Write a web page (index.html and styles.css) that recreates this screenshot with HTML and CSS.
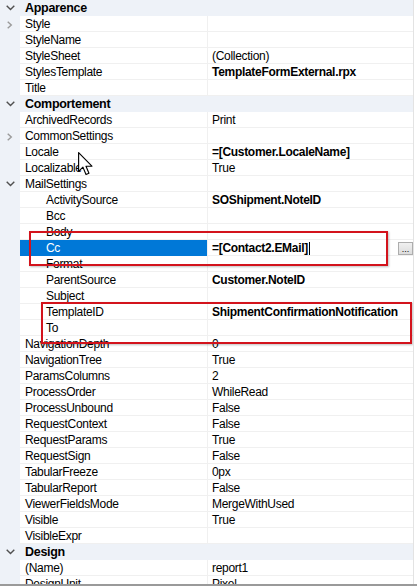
FILE: index.html
```html
<!DOCTYPE html>
<html>
<head>
<meta charset="utf-8">
<link rel="stylesheet" href="styles.css">
</head>
<body>
<div class="grid">
  <div class="row cat"><span class="gut"><svg class="down" width="9" height="6" viewBox="0 0 9 6"><polyline points="0.7,0.7 4.5,4.5 8.3,0.7"/></svg></span><span class="ctitle">Apparence</span></div>
  <div class="row"><span class="gut"><svg class="right" width="6" height="8" viewBox="0 0 6 8"><polyline points="0.7,0.7 4.3,4 0.7,7.3"/></svg></span><span class="name">Style</span><span class="val"></span></div>
  <div class="row"><span class="gut"></span><span class="name">StyleName</span><span class="val"></span></div>
  <div class="row"><span class="gut"></span><span class="name">StyleSheet</span><span class="val">(Collection)</span></div>
  <div class="row"><span class="gut"></span><span class="name">StylesTemplate</span><span class="val b">TemplateFormExternal.rpx</span></div>
  <div class="row"><span class="gut"></span><span class="name">Title</span><span class="val"></span></div>
  <div class="row cat"><span class="gut"><svg class="down" width="9" height="6" viewBox="0 0 9 6"><polyline points="0.7,0.7 4.5,4.5 8.3,0.7"/></svg></span><span class="ctitle">Comportement</span></div>
  <div class="row"><span class="gut"></span><span class="name">ArchivedRecords</span><span class="val">Print</span></div>
  <div class="row"><span class="gut"><svg class="right" width="6" height="8" viewBox="0 0 6 8"><polyline points="0.7,0.7 4.3,4 0.7,7.3"/></svg></span><span class="name">CommonSettings</span><span class="val"></span></div>
  <div class="row"><span class="gut"></span><span class="name">Locale</span><span class="val b">=[Customer.LocaleName]</span></div>
  <div class="row"><span class="gut"></span><span class="name">Localizable</span><span class="val">True</span></div>
  <div class="row"><span class="gut"><svg class="down" width="9" height="6" viewBox="0 0 9 6"><polyline points="0.7,0.7 4.5,4.5 8.3,0.7"/></svg></span><span class="name">MailSettings</span><span class="val"></span></div>
  <div class="row"><span class="gut"></span><span class="name sub">ActivitySource</span><span class="val b">SOShipment.NoteID</span></div>
  <div class="row"><span class="gut"></span><span class="name sub">Bcc</span><span class="val"></span></div>
  <div class="row"><span class="gut"></span><span class="name sub">Body</span><span class="val"></span></div>
  <div class="row"><span class="gut"></span><span class="name sub sel">Cc</span><span class="val b edit"><span>=[Contact2.EMail]</span><span class="caret"></span><span class="btn">...</span></span></div>
  <div class="row"><span class="gut"></span><span class="name sub">Format</span><span class="val"></span></div>
  <div class="row"><span class="gut"></span><span class="name sub">ParentSource</span><span class="val b">Customer.NoteID</span></div>
  <div class="row"><span class="gut"></span><span class="name sub">Subject</span><span class="val"></span></div>
  <div class="row"><span class="gut"></span><span class="name sub">TemplateID</span><span class="val b">ShipmentConfirmationNotification</span></div>
  <div class="row"><span class="gut"></span><span class="name sub">To</span><span class="val"></span></div>
  <div class="row"><span class="gut"></span><span class="name">NavigationDepth</span><span class="val">0</span></div>
  <div class="row"><span class="gut"></span><span class="name">NavigationTree</span><span class="val">True</span></div>
  <div class="row"><span class="gut"></span><span class="name">ParamsColumns</span><span class="val">2</span></div>
  <div class="row"><span class="gut"></span><span class="name">ProcessOrder</span><span class="val">WhileRead</span></div>
  <div class="row"><span class="gut"></span><span class="name">ProcessUnbound</span><span class="val">False</span></div>
  <div class="row"><span class="gut"></span><span class="name">RequestContext</span><span class="val">False</span></div>
  <div class="row"><span class="gut"></span><span class="name">RequestParams</span><span class="val">True</span></div>
  <div class="row"><span class="gut"></span><span class="name">RequestSign</span><span class="val">False</span></div>
  <div class="row"><span class="gut"></span><span class="name">TabularFreeze</span><span class="val">0px</span></div>
  <div class="row"><span class="gut"></span><span class="name">TabularReport</span><span class="val">False</span></div>
  <div class="row"><span class="gut"></span><span class="name">ViewerFieldsMode</span><span class="val">MergeWithUsed</span></div>
  <div class="row"><span class="gut"></span><span class="name">Visible</span><span class="val">True</span></div>
  <div class="row"><span class="gut"></span><span class="name">VisibleExpr</span><span class="val"></span></div>
  <div class="row cat"><span class="gut"><svg class="down" width="9" height="6" viewBox="0 0 9 6"><polyline points="0.7,0.7 4.5,4.5 8.3,0.7"/></svg></span><span class="ctitle">Design</span></div>
  <div class="row"><span class="gut"></span><span class="name">(Name)</span><span class="val">report1</span></div>
  <div class="row"><span class="gut"></span><span class="name">DesignUnit</span><span class="val">Pixel</span></div>

  <div class="mark mark1"></div>
  <div class="mark mark2"></div>
  <svg class="cursor" width="16" height="25" viewBox="0 0 14 22"><path d="M0.5,0.5 L0.5,17 L4.3,13.3 L7,19.8 L9.6,18.7 L7,12.5 L12.2,12.5 Z"/></svg>
</div>
<div class="bottombar"></div>
</body>
</html>
```

FILE: styles.css
```css
html, body {
  margin: 0;
  padding: 0;
  background: #ffffff;
  width: 417px;
  height: 586px;
  overflow: hidden;
}
body {
  font-family: "Liberation Sans", Arial, sans-serif;
  font-size: 12px;
  color: #000;
  position: relative;
}
.grid {
  position: relative;
  width: 414px;
  height: 584px;
  overflow: hidden;
  border-right: 1px solid #e3e3e3;
  box-sizing: border-box;
}
.row {
  display: flex;
  height: 16px;
  line-height: 13px;
  white-space: nowrap;
}
.gut {
  width: 20px;
  flex: none;
  background: #eef2f8;
  position: relative;
}
.name {
  width: 187px;
  flex: none;
  padding: 2px 0 0 5px;
  box-sizing: border-box;
  border-bottom: 1px solid #f0f0f0;
  letter-spacing: -0.3px;
}
.name.sub { padding-left: 26px; }
.name.sel {
  background: #0078d7;
  color: #fff;
  border-bottom-color: #0078d7;
}
.val {
  flex: 1;
  padding: 2px 0 0 4px;
  border-left: 1px solid #f0f0f0;
  border-bottom: 1px solid #f0f0f0;
  letter-spacing: -0.3px;
  overflow: hidden;
  box-sizing: border-box;
}
.val.b { font-weight: bold; letter-spacing: -0.3px; }
.val.edit {
  display: flex;
  align-items: center;
  position: relative;
  padding-top: 1px;
}
.caret {
  display: inline-block;
  width: 1px;
  height: 13px;
  background: #000;
  margin-left: 1px;
}
.btn {
  margin-left: auto;
  margin-right: 0;
  width: 15px;
  height: 13px;
  box-sizing: border-box;
  border: 1px solid #adadad;
  background: linear-gradient(#f0f0f0, #dcdcdc);
  font-size: 9px;
  line-height: 12px;
  font-weight: normal;
  text-align: center;
  letter-spacing: 0;
  color: #000;
}
.cat { background: #eef2f8; }
.cat .ctitle {
  padding: 2px 0 0 5px;
  font-weight: bold;
  font-size: 12.5px;
  letter-spacing: -0.3px;
}
svg.down, svg.right {
  position: absolute;
  fill: none;
  stroke-width: 1.4;
}
svg.down { left: 6px; top: 5px; stroke: #505050; }
svg.right { left: 7px; top: 5px; stroke: #9a9a9a; }
.mark {
  position: absolute;
  border: 2.5px solid #d3131c;
  box-shadow: 1px 1px 2px rgba(0,0,0,0.25);
  box-sizing: border-box;
}
.mark1 { left: 29px; top: 231px; width: 359px; height: 35px; }
.mark2 { left: 41px; top: 302px; width: 371px; height: 42px; }
.cursor {
  position: absolute;
  left: 78px;
  top: 152px;
  fill: #fff;
  stroke: #000;
  stroke-width: 1;
  stroke-linejoin: round;
}
.bottombar {
  position: absolute;
  left: 0;
  top: 584px;
  width: 417px;
  height: 2px;
  background: #9a9a9a;
}
```
